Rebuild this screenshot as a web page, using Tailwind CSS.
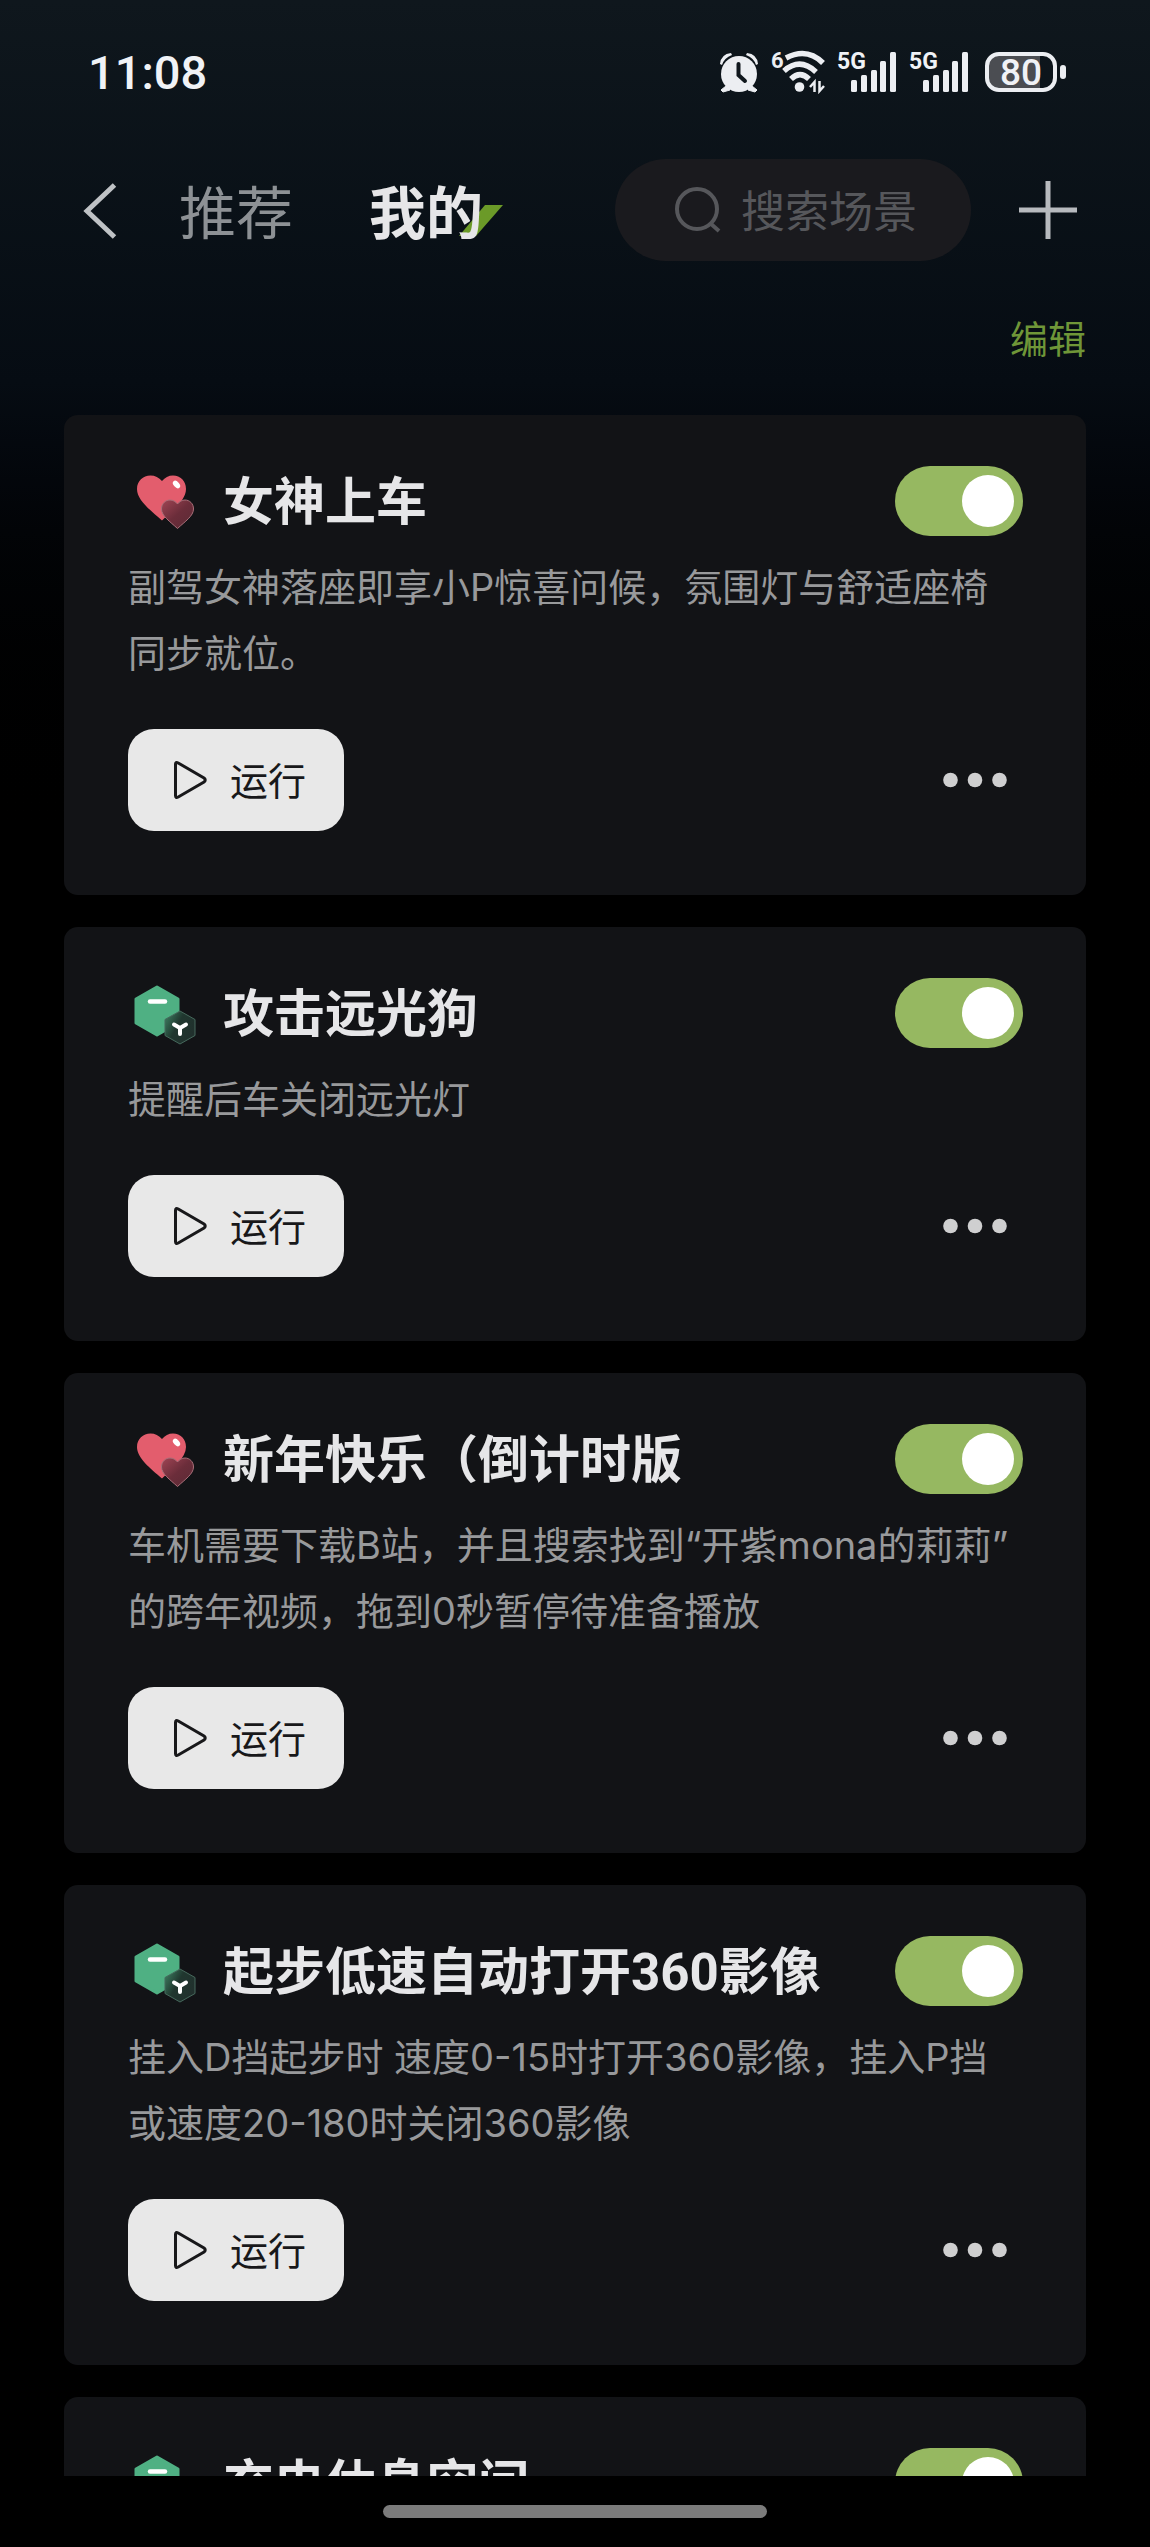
<!DOCTYPE html>
<html lang="zh-CN">
<head>
<meta charset="utf-8">
<meta name="viewport" content="width=device-width, initial-scale=1">
<title>我的场景</title>
<script src="https://cdn.jsdelivr.net/npm/@tailwindcss/browser@4"></script>
</head>
<body class="bg-black font-['Noto_Sans_CJK_SC',sans-serif] text-[#e6e6e8]">
<svg class="absolute size-0" aria-hidden="true">
  <defs>
    <linearGradient id="glassHeart" x1="0" y1="0" x2="1" y2="1"><stop offset="0" stop-color="#a04554"/><stop offset=".5" stop-color="#6b2d3a"/><stop offset="1" stop-color="#5a2a35"/></linearGradient>
    <linearGradient id="glassHex" x1="0" y1="0" x2="1" y2="0.6"><stop offset="0" stop-color="#3f8565"/><stop offset=".5" stop-color="#20372f"/><stop offset="1" stop-color="#21302d"/></linearGradient>
    <symbol id="hearts" viewBox="0 0 80 70">
      <path d="M34 54.500C22 44 9 34 9 23C9 15 15 9.500 22.500 9.500C27 9.500 31 11.500 34 15C37 11.500 40.500 9.500 45 9.500C52.500 9.500 58 15 58 23C58 34 45 44 34 54.500Z" fill="#e35d6d"/>
      <ellipse cx="48.500" cy="18.500" rx="2.800" ry="4.400" transform="rotate(-42 48.500 18.500)" fill="#fff"/>
      <path d="M49.500 62.500C42 55.500 33.500 50 33.500 43C33.500 37.500 37.500 34 42 34C45 34 47.500 35.500 49.500 38C51.500 35.500 54 34 57 34C61.500 34 65.500 37.500 65.500 43C65.500 50 57 55.500 49.500 62.500Z" fill="url(#glassHeart)" stroke="#a9707a" stroke-width="1"/>
    </symbol>
    <symbol id="hexes" viewBox="0 0 80 70">
      <path d="M29 9L50 21V45L29 57L8 45V21Z" fill="#4fb083" stroke="#4fb083" stroke-width="3" stroke-linejoin="round"/>
      <path d="M22 23.500H37" stroke="#fff" stroke-width="4.500" stroke-linecap="round"/>
      <path d="M52 33L67 41.500V57.500L52 66L37 57.500V41.500Z" fill="url(#glassHex)" stroke="#46695c" stroke-width="1" stroke-linejoin="round"/>
      <path d="M46 46.500L52 50L58 46.500M52 50V56" fill="none" stroke="#fff" stroke-width="4" stroke-linecap="round" stroke-linejoin="round"/>
    </symbol>
    <symbol id="play" viewBox="0 0 36 40"><path d="M3.500 4.500V35.500Q3.500 38.500 6.200 37L32 22Q34.500 20 32 18L6.200 3Q3.500 1.500 3.500 4.500Z" fill="none" stroke="#18181a" stroke-width="3"/></symbol>
    <symbol id="dots" viewBox="0 0 64 16"><g fill="#cfcfd0"><circle cx="7.500" cy="8" r="7.300"/><circle cx="32" cy="8" r="7.300"/><circle cx="56.500" cy="8" r="7.300"/></g></symbol>
    <symbol id="signal" viewBox="0 0 60 44">
      <g fill="#eceef2"><rect x="14" y="30" width="6" height="12" rx="1.500"/><rect x="24" y="25" width="6" height="17" rx="1.500"/><rect x="34" y="20" width="6" height="22" rx="1.500"/><rect x="43" y="11" width="6" height="31" rx="1.500"/><rect x="53" y="2" width="6" height="40" rx="1.500"/></g>
    </symbol>
  </defs>
</svg>

<div class="flex h-screen flex-col overflow-hidden bg-linear-to-b from-[#0f171d] from-0% via-[#060c13] via-15% to-black to-34%">
  <div class="flex h-36 shrink-0 items-center justify-between pr-[84px] pl-[88px] font-[Roboto,sans-serif] text-[#f0f2f6]">
    <time class="text-[47px] leading-none font-medium">11:08</time>
    <div class="flex items-center gap-[12px]">
      <svg class="h-11 w-10" viewBox="0 0 40 44" role="img" aria-label="闹钟">
        <g fill="#eceef2"><circle cx="20" cy="24" r="18"/><path d="M1 14Q2 4 12 3L13 5Q5 8 3 15ZM39 14Q38 4 28 3L27 5Q35 8 37 15Z"/><path d="M7 36L2 40L4 42L11 40ZM33 36L38 40L36 42L29 40Z" stroke="#eceef2" stroke-width="1"/></g>
        <path d="M19.500 14V25L26 31" fill="none" stroke="#10171d" stroke-width="4" stroke-linecap="round"/>
      </svg>
      <svg class="h-11 w-[54px]" viewBox="0 0 54 44" role="img" aria-label="Wi-Fi 6">
        <text x="0" y="18" font-family="Roboto,sans-serif" font-size="22" font-weight="700" fill="#eceef2">6</text>
        <g fill="none" stroke="#eceef2" stroke-width="5.500"><path d="M15 8Q36 -3 52 13"/><path d="M13 21Q29 7 45 22"/><path d="M20 29Q29 20 38 29"/></g>
        <circle cx="28.500" cy="37" r="4.800" fill="#eceef2"/>
        <path d="M39 37L43.500 32V42M48.500 31V41L53 36" fill="none" stroke="#eceef2" stroke-width="2.500"/>
      </svg>
      <div class="relative"><svg class="h-11 w-[60px]"><use href="#signal"/></svg><span class="absolute top-0 left-0 text-[23px] leading-6 font-bold">5G</span></div>
      <div class="relative"><svg class="h-11 w-[60px]"><use href="#signal"/></svg><span class="absolute top-0 left-0 text-[23px] leading-6 font-bold">5G</span></div>
      <div class="flex items-center gap-[3px] pl-1">
        <div class="flex h-10 w-[72px] items-center justify-center rounded-[14px] border-4 border-[#eceef2] bg-linear-to-r from-[#4b4d52] from-80% to-transparent to-80% text-[37px] leading-none font-medium">80</div>
        <div class="h-[14px] w-[6px] rounded-[3px] bg-[#eceef2]"></div>
      </div>
    </div>
  </div>

  <header class="flex h-[132px] shrink-0 items-center pr-[73px] pl-20">
    <button class="mr-[59px]" aria-label="返回"><svg class="h-[60px] w-10" viewBox="0 0 40 60" fill="none" stroke="#bfc2c5" stroke-width="5"><path d="M34.500 5L7 31L34.500 57"/></svg></button>
    <nav class="flex flex-1 items-center gap-[76px] pb-[2px] text-[57px] leading-[66px]">
      <a href="#recommend" class="text-[#8d9195]">推荐</a>
      <a href="#mine" class="relative font-bold"><svg class="absolute top-[28px] -right-5 h-8 w-11" viewBox="0 0 44 32"><path d="M26 1H44L17 32H0Z" fill="#6b9a28"/></svg><span class="relative">我的</span></a>
    </nav>
    <label class="mr-12 flex h-[102px] w-[356px] items-center gap-[18px] rounded-full bg-[#1a1a1e] pl-[60px]">
      <svg class="size-12 shrink-0" viewBox="0 0 48 48" fill="none" stroke="#56575b" stroke-width="4"><circle cx="22" cy="23" r="20"/><path d="M35 37L44 45"/></svg>
      <input type="search" aria-label="搜索场景" placeholder="搜索场景" class="w-full min-w-0 bg-transparent pb-[2px] text-[44px] leading-[66px] outline-none placeholder:text-[#56575b]">
    </label>
    <button aria-label="添加"><svg class="size-[58px]" viewBox="0 0 58 58" stroke="#b7babe" stroke-width="5"><path d="M0 29H58M29 0V58"/></svg></button>
  </header>

  <div class="flex h-[139px] shrink-0 justify-end px-16 pt-7">
    <button class="h-[66px] text-[38px] leading-[66px] text-[#6f9638]">编辑</button>
  </div>

  <main id="list" class="flex min-h-0 flex-1 flex-col gap-8 overflow-hidden px-16"></main>

  <footer class="flex h-[71px] shrink-0 justify-center bg-black pt-[29px]"><div class="h-[13px] w-1/3 rounded-full bg-[#7b7b7b]"></div></footer>
</div>

<template id="card">
  <article class="shrink-0 rounded-[14px] bg-[#121316] pt-[51px] pr-[63px] pb-16 pl-16">
    <div class="flex h-[70px] items-center">
      <svg class="mr-[15px] h-[70px] w-20 shrink-0"><use/></svg>
      <h2 class="flex-1 pt-1 font-[Roboto,'Noto_Sans_CJK_SC',sans-serif] text-[51px] leading-[70px] font-bold whitespace-nowrap"></h2>
      <label class="relative flex">
        <input type="checkbox" role="switch" checked class="peer h-[70px] w-32 appearance-none rounded-full bg-[#51545a] checked:bg-[#96b861]">
        <span class="pointer-events-none absolute top-[9px] left-[9px] size-[52px] rounded-full bg-white peer-checked:left-[67px]"></span>
      </label>
    </div>
    <p class="mt-[18px] pr-1 font-[Inter,'Noto_Sans_CJK_SC',sans-serif] text-[38px] leading-[66px] text-[#98999b]"></p>
    <div class="mt-[43px] flex items-center justify-between">
      <button class="flex h-[102px] w-[216px] items-center rounded-[26px] bg-[#e8e8e8] pl-11 text-[38px] leading-[66px] text-[#18181a]"><svg class="mr-[22px] h-10 w-9"><use href="#play"/></svg><span class="pb-[2px]">运行</span></button>
      <button class="mr-4" aria-label="更多"><svg class="h-4 w-16"><use href="#dots"/></svg></button>
    </div>
  </article>
</template>
<script>
  const scenes = [
    ['hearts', '女神上车', '副驾女神落座即享小P惊喜问候，氛围灯与舒适座椅同步就位。'],
    ['hexes', '攻击远光狗', '提醒后车关闭远光灯'],
    ['hearts', '新年快乐（倒计时版', '车机需要下载B站，并且搜索找到“开紫mona的莉莉”的跨年视频，拖到0秒暂停待准备播放'],
    ['hexes', '起步低速自动打开360影像', '挂入D挡起步时 速度0-15时打开360影像，挂入P挡或速度20-180时关闭360影像'],
    ['hexes', '充电休息空间', '']
  ];
  const template = document.getElementById('card');
  for (const [icon, title, text] of scenes) {
    const card = template.content.cloneNode(true);
    card.querySelector('use').setAttribute('href', '#' + icon);
    card.querySelector('h2').textContent = title;
    card.querySelector('p').textContent = text;
    card.querySelector('input').setAttribute('aria-label', title);
    document.getElementById('list').append(card);
  }
</script>
</body>
</html>
